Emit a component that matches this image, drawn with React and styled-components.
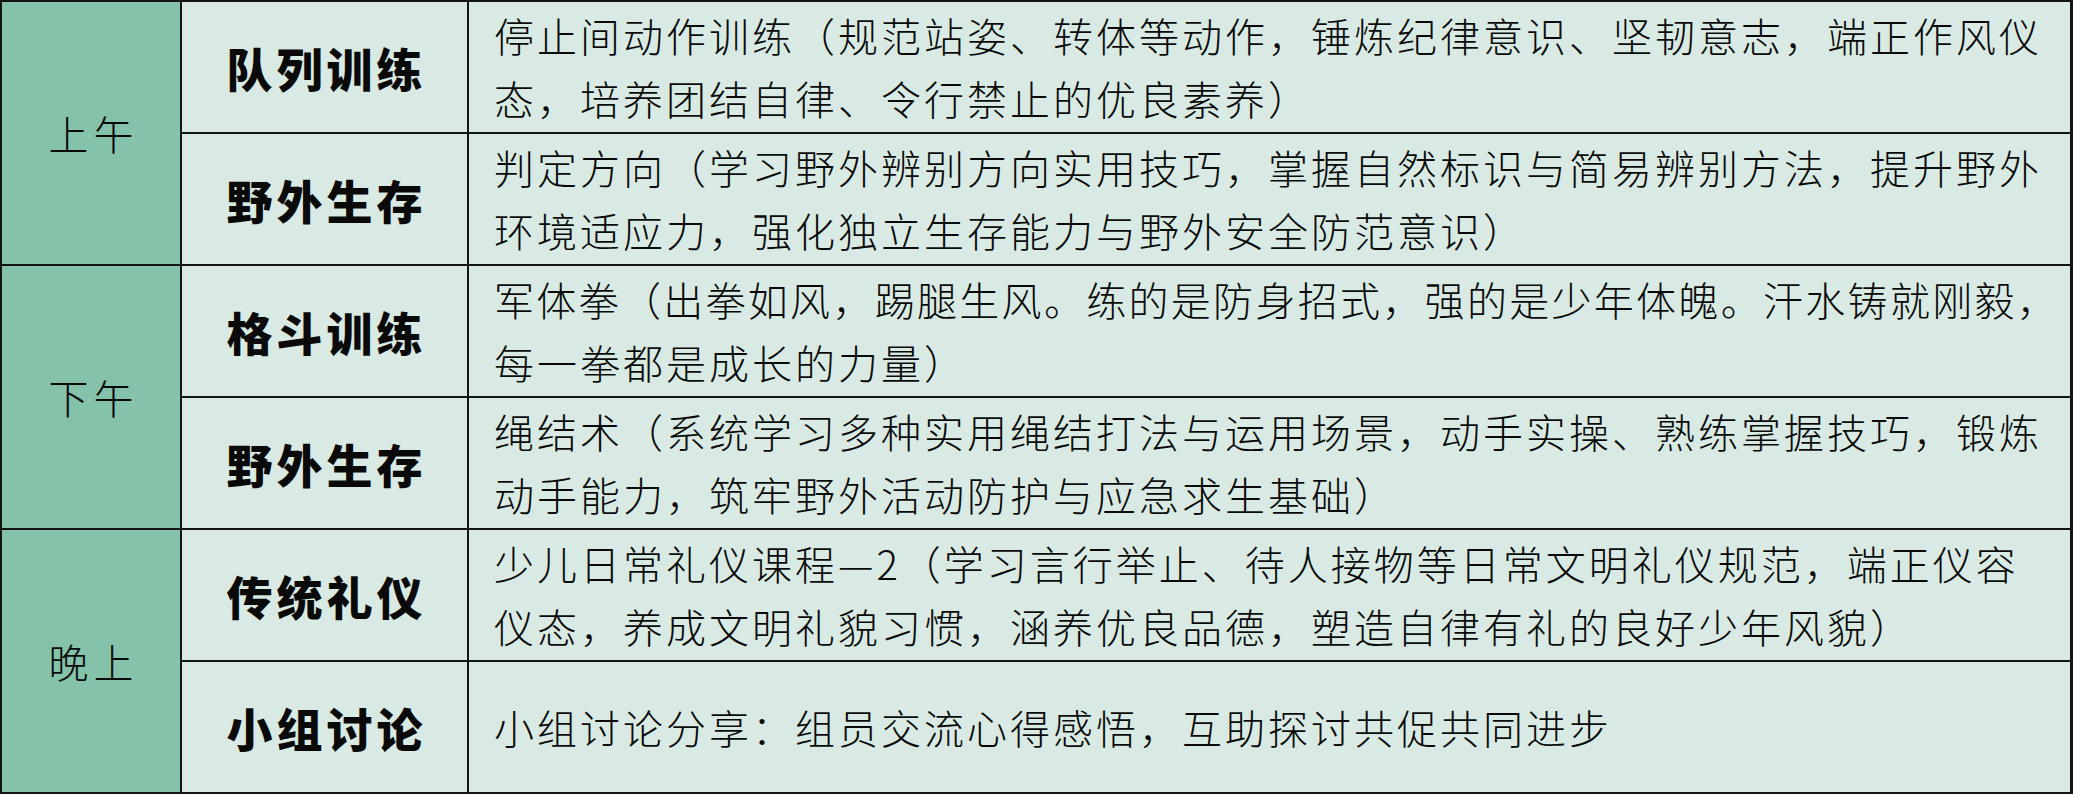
import React from "react";
import styled, { createGlobalStyle } from "styled-components";

const GlobalStyle = createGlobalStyle`
  html, body {
    margin: 0;
    padding: 0;
    background: #ffffff;
  }
  body {
    font-family: "Noto Sans CJK SC", "Noto Sans", sans-serif;
  }
`;

const Table = styled.div`
  width: 2073px;
  height: 794px;
  box-sizing: border-box;
  display: grid;
  grid-template-columns: 178px 285px 1fr;
  grid-auto-rows: 130px;
  gap: 2px;
  padding: 2px 3px 2px 2px;
  background: #141414;
  color: #0a0a0a;
`;

const PeriodCell = styled.div`
  grid-row: span 2;
  background: #84c3aa;
  display: flex;
  align-items: center;
  justify-content: center;
  font-family: "Noto Sans CJK SC", sans-serif;
  font-weight: 300;
  font-size: 40px;
  letter-spacing: 5px;
  padding-left: 5px;
`;

const TopicCell = styled.div`
  background: #d8eae3;
  display: flex;
  align-items: center;
  justify-content: center;
  font-family: "Noto Sans CJK SC", sans-serif;
  font-weight: 900;
  font-size: 46px;
  letter-spacing: 4px;
  padding-left: 4px;
`;

const DescCell = styled.div`
  background: #d8eae3;
  display: flex;
  flex-direction: column;
  justify-content: center;
  padding-left: 25px;
  min-width: 0;
`;

const Line = styled.span`
  display: block;
  white-space: nowrap;
  font-family: "Noto Sans CJK SC", sans-serif;
  font-weight: 300;
  font-size: 40px;
  line-height: 63px;
  letter-spacing: ${(p) => (p.$tight ? "2.3px" : "3px")};
`;

const schedule = [
  {
    period: "上午",
    items: [
      {
        topic: "队列训练",
        lines: [
          "停止间动作训练（规范站姿、转体等动作，锤炼纪律意识、坚韧意志，端正作风仪",
          "态，培养团结自律、令行禁止的优良素养）",
        ],
      },
      {
        topic: "野外生存",
        lines: [
          "判定方向（学习野外辨别方向实用技巧，掌握自然标识与简易辨别方法，提升野外",
          "环境适应力，强化独立生存能力与野外安全防范意识）",
        ],
      },
    ],
  },
  {
    period: "下午",
    items: [
      {
        topic: "格斗训练",
        tight: true,
        lines: [
          "军体拳（出拳如风，踢腿生风。练的是防身招式，强的是少年体魄。汗水铸就刚毅，",
          "每一拳都是成长的力量）",
        ],
      },
      {
        topic: "野外生存",
        lines: [
          "绳结术（系统学习多种实用绳结打法与运用场景，动手实操、熟练掌握技巧，锻炼",
          "动手能力，筑牢野外活动防护与应急求生基础）",
        ],
      },
    ],
  },
  {
    period: "晚上",
    items: [
      {
        topic: "传统礼仪",
        lines: [
          "少儿日常礼仪课程—2（学习言行举止、待人接物等日常文明礼仪规范，端正仪容",
          "仪态，养成文明礼貌习惯，涵养优良品德，塑造自律有礼的良好少年风貌）",
        ],
      },
      {
        topic: "小组讨论",
        lines: ["小组讨论分享：组员交流心得感悟，互助探讨共促共同进步"],
      },
    ],
  },
];

export default function App() {
  return (
    <>
      <GlobalStyle />
      <Table>
        {schedule.map((group) => (
          <React.Fragment key={group.period}>
            <PeriodCell>{group.period}</PeriodCell>
            {group.items.map((item, i) => (
              <React.Fragment key={i}>
                <TopicCell>{item.topic}</TopicCell>
                <DescCell>
                  {item.lines.map((l, j) => (
                    <Line key={j} $tight={item.tight && j === 0}>
                      {l}
                    </Line>
                  ))}
                </DescCell>
              </React.Fragment>
            ))}
          </React.Fragment>
        ))}
      </Table>
    </>
  );
}
